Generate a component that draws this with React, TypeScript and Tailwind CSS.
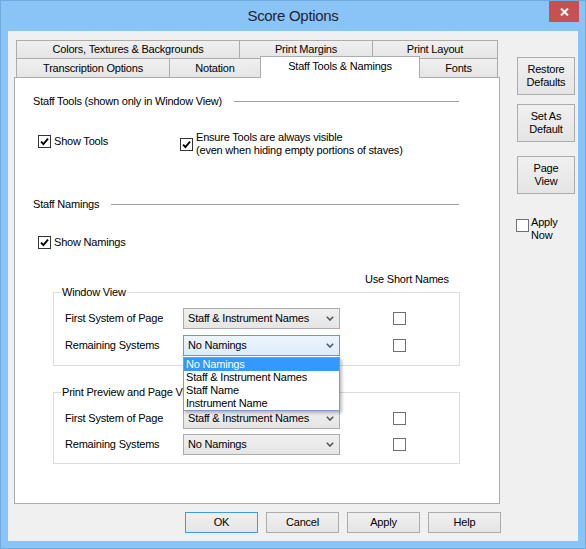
import { ReactNode } from 'react';

const tabBase =
  'flex items-center justify-center border-x border-t border-[#acacac] bg-linear-to-b from-[#f0f0f0] to-[#e5e5e5] leading-[13px]';
const btnBase =
  'flex items-center justify-center border bg-linear-to-b from-[#f0f0f0] to-[#e5e5e5] leading-[13px] text-center';

function CheckBox({ checked, dark }: { checked?: boolean; dark?: boolean }) {
  return (
    <span
      className={
        dark
          ? 'flex h-[13px] w-[13px] shrink-0 items-center justify-center border border-[#333333] bg-white'
          : 'flex h-[13px] w-[13px] shrink-0 items-center justify-center border border-[#707070] bg-white'
      }
    >
      {checked && (
        <svg width="9" height="9" viewBox="0 0 9 9">
          <path d="M1 4.6 L3.4 7 L8 1.6" fill="none" stroke="#000" strokeWidth="1.9" />
        </svg>
      )}
    </span>
  );
}

function Chevron() {
  return (
    <svg width="8" height="5" viewBox="0 0 8 5" className="shrink-0">
      <polyline points="0.8,0.8 4,4 7.2,0.8" fill="none" stroke="#555" strokeWidth="1.6" />
    </svg>
  );
}

function Combo({ value, focused, children }: { value: string; focused?: boolean; children?: ReactNode }) {
  return (
    <div
      className={
        focused
          ? 'relative flex h-[21px] w-[157px] shrink-0 items-center border border-[#569de5] bg-linear-to-b from-[#ecf4fc] to-[#dcecfc] pl-[4px] pr-[5px]'
          : 'relative flex h-[21px] w-[157px] shrink-0 items-center border border-[#acacac] bg-linear-to-b from-[#f0f0f0] to-[#e5e5e5] pl-[4px] pr-[5px]'
      }
    >
      <span className="flex-1 leading-[13px]">{value}</span>
      <Chevron />
      {children}
    </div>
  );
}

function NamingRow({ label, value, focused, children }: { label: string; value: string; focused?: boolean; children?: ReactNode }) {
  return (
    <div className="flex h-[21px] items-center">
      <span className="w-[129px] shrink-0 pl-[11px] leading-[13px]">{label}</span>
      <Combo value={value} focused={focused}>
        {children}
      </Combo>
      <span className="ml-[53px]">
        <CheckBox />
      </span>
    </div>
  );
}

function SectionHeader({ title }: { title: string }) {
  return (
    <div className="flex items-center pl-[18px] pr-[40px]">
      <span className="leading-[13px]">{title}</span>
      <span className="ml-[12px] h-px flex-1 bg-[#a0a0a0]" />
    </div>
  );
}

function DropList() {
  const items = ['No Namings', 'Staff & Instrument Names', 'Staff Name', 'Instrument Name'];
  return (
    <div className="absolute left-[-1px] top-[21px] z-20 w-[157px] border border-[#7d9bd0] bg-white shadow-[2px_2px_3px_rgba(0,0,0,0.25)]">
      {items.map((it, i) => (
        <div
          key={it}
          className={
            i === 0
              ? 'h-[13px] bg-[#3399ff] pl-[2px] leading-[13px] text-white'
              : 'h-[13px] pl-[2px] leading-[13px] text-black'
          }
        >
          {it}
        </div>
      ))}
    </div>
  );
}

export default function App() {
  return (
    <div className="h-[549px] w-[586px] overflow-hidden border border-[#6fa9df] bg-[#8ac4f6] font-['Liberation_Sans',Arial,sans-serif] text-[11px] tracking-[-0.2px] text-black">
      {/* Title bar */}
      <div className="relative flex h-[30px] items-center justify-center">
        <span className="text-[15px] tracking-[-0.3px] text-[#1f1f33]">Score Options</span>
        <div className="absolute right-[6px] top-0 flex h-[21px] w-[30px] items-center justify-center bg-[#c75050]">
          <svg width="9" height="8" viewBox="0 0 9 8">
            <path d="M1 0.5 L8 7.5 M8 0.5 L1 7.5" stroke="#fff" strokeWidth="2" />
          </svg>
        </div>
      </div>

      {/* Client area */}
      <div className="ml-[7px] flex h-[510px] w-[570px] flex-col bg-[#f0f0f0]">
        <div className="flex pl-[6px] pt-[9px]">
          {/* Tab control */}
          <div className="flex w-[486px] flex-col">
            <div className="flex h-[18px] pl-[2px]">
              <div className={`${tabBase} w-[224px]`}>Colors, Textures &amp; Backgrounds</div>
              <div className={`${tabBase} -ml-px w-[134px]`}>Print Margins</div>
              <div className={`${tabBase} -ml-px w-[126px]`}>Print Layout</div>
            </div>
            <div className="flex h-[19px] items-start pl-[2px]">
              <div className={`${tabBase} h-[19px] w-[154px]`}>Transcription Options</div>
              <div className={`${tabBase} -ml-px h-[19px] w-[92px]`}>Notation</div>
              <div className="relative z-10 -ml-px -mt-[2px] flex h-[22px] w-[160px] items-center justify-center border-x border-t border-[#acacac] bg-white pb-[2px] leading-[13px]">
                Staff Tools &amp; Namings
              </div>
              <div className={`${tabBase} -ml-px h-[19px] w-[79px]`}>Fonts</div>
            </div>

            {/* Panel */}
            <div className="flex h-[427px] flex-col border border-[#acacac] bg-white pt-[17px]">
              <SectionHeader title="Staff Tools (shown only in Window View)" />

              <div className="mt-[23px] flex items-start pl-[23px]">
                <div className="mt-[4px] flex w-[142px] items-center gap-[3px]">
                  <CheckBox checked dark />
                  <span className="leading-[13px]">Show Tools</span>
                </div>
                <div className="flex items-center gap-[3px]">
                  <CheckBox checked dark />
                  <span className="leading-[13px]">
                    Ensure Tools are always visible
                    <br />
                    (even when hiding empty portions of staves)
                  </span>
                </div>
              </div>

              <div className="mt-[41px]">
                <SectionHeader title="Staff Namings" />
              </div>

              <div className="mt-[25px] flex items-center gap-[3px] pl-[23px]">
                <CheckBox checked dark />
                <span className="leading-[13px]">Show Namings</span>
              </div>

              <div className="mt-[24px] pl-[350px] leading-[13px]">Use Short Names</div>

              <fieldset className="ml-[38px] w-[407px] border border-[#dcdcdc] pb-[9px]">
                <legend className="ml-[7px] px-[1px] leading-[13px]">Window View</legend>
                <div className="mt-[9px] flex flex-col gap-[6px]">
                  <NamingRow label="First System of Page" value="Staff & Instrument Names" />
                  <NamingRow label="Remaining Systems" value="No Namings" focused>
                    <DropList />
                  </NamingRow>
                </div>
              </fieldset>

              <fieldset className="ml-[38px] mt-[20px] w-[407px] border border-[#dcdcdc] pb-[8px]">
                <legend className="ml-[7px] px-[1px] leading-[13px]">Print Preview and Page View</legend>
                <div className="mt-[9px] flex flex-col gap-[5px]">
                  <NamingRow label="First System of Page" value="Staff & Instrument Names" />
                  <NamingRow label="Remaining Systems" value="No Namings" />
                </div>
              </fieldset>
            </div>
          </div>

          {/* Right column */}
          <div className="ml-[17px] mt-[17px] flex w-[58px] flex-col">
            <div className={`${btnBase} h-[38px] border-[#acacac]`}>
              Restore
              <br />
              Defaults
            </div>
            <div className={`${btnBase} mt-[9px] h-[38px] border-[#acacac]`}>
              Set As
              <br />
              Default
            </div>
            <div className={`${btnBase} mt-[14px] h-[38px] border-[#acacac]`}>
              Page
              <br />
              View
            </div>
            <div className="-ml-px mt-[22px] flex items-start gap-[2px]">
              <span className="mt-[3px]">
                <CheckBox />
              </span>
              <span className="leading-[13px]">
                Apply
                <br />
                Now
              </span>
            </div>
          </div>
        </div>

        {/* Bottom buttons */}
        <div className="mt-[8px] flex gap-[8px] pl-[177px]">
          <div className={`${btnBase} h-[21px] w-[73px] border-[#3c9bef]`}>OK</div>
          <div className={`${btnBase} h-[21px] w-[73px] border-[#acacac]`}>Cancel</div>
          <div className={`${btnBase} h-[21px] w-[73px] border-[#acacac]`}>Apply</div>
          <div className={`${btnBase} h-[21px] w-[73px] border-[#acacac]`}>Help</div>
        </div>
      </div>
    </div>
  );
}
